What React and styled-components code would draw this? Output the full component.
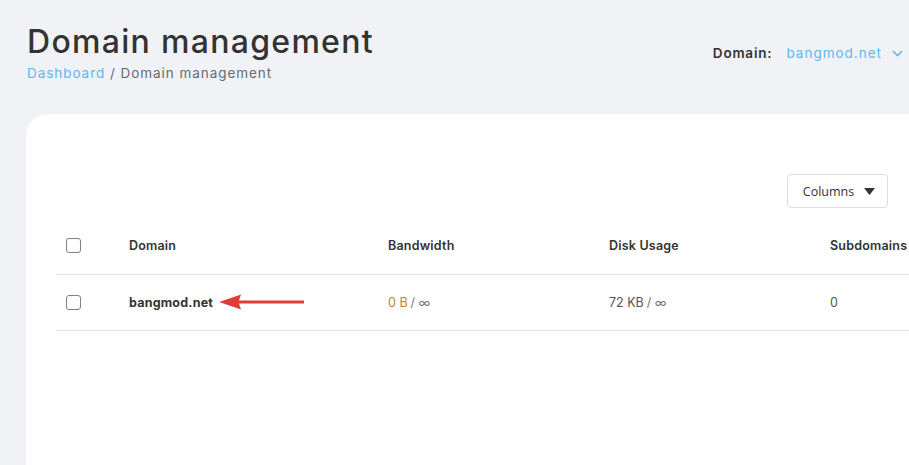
import React from "react";
import styled, { createGlobalStyle } from "styled-components";

const Global = createGlobalStyle`
  html, body { margin: 0; padding: 0; background: #f1f2f6; overflow: hidden; }
  body { font-family: "Inter", "DejaVu Sans", sans-serif; color: #333; }
  * { box-sizing: border-box; }
`;

const Page = styled.div`
  width: 909px;
  height: 465px;
  overflow: hidden;
  background: #f1f2f6;
`;

const Header = styled.header`
  display: flex;
  justify-content: space-between;
  align-items: flex-start;
  padding: 22px 6px 0 27px;
  height: 114px;
`;

const TitleBlock = styled.div`
  display: flex;
  flex-direction: column;
`;

const Title = styled.h1`
  margin: 0;
  font-size: 32px;
  font-weight: 500;
  line-height: 40px;
  color: #333;
  letter-spacing: 1.3px;
`;

const Crumbs = styled.div`
  font-size: 13.5px;
  line-height: 20px;
  color: #666a73;
  margin-top: 1px;
  letter-spacing: 0.95px;
`;

const CrumbLink = styled.a`
  color: #60b6f5;
  text-decoration: none;
`;

const DomainPicker = styled.div`
  display: flex;
  align-items: center;
  margin-top: 23px;
  font-size: 13.5px;
`;

const PickerLabel = styled.span`
  font-weight: 600;
  color: #333;
  margin-right: 14px;
  letter-spacing: 0.8px;
`;

const PickerValue = styled.span`
  color: #60b6f5;
  display: flex;
  align-items: center;
  gap: 10px;
  letter-spacing: 1px;
`;

const Card = styled.section`
  margin-left: 26px;
  width: 920px;
  height: 400px;
  background: #fff;
  border-radius: 22px 0 0 0;
  padding: 60px 0 0 30px;
`;

const Toolbar = styled.div`
  display: flex;
  justify-content: flex-end;
  width: 832px;
  margin-bottom: 10px;
`;

const ColumnsButton = styled.button`
  height: 34px;
  width: 101px;
  border: 1px solid #dcdde0;
  border-radius: 4px;
  background: #fff;
  font-family: "Open Sans", sans-serif;
  font-size: 12.5px;
  color: #333;
  display: flex;
  align-items: center;
  justify-content: center;
  gap: 10px;
  padding: 0 0 0 3px;
`;

const Table = styled.table`
  border-collapse: collapse;
  width: 900px;
  font-size: 12.5px;
  letter-spacing: 0.2px;
`;

const Th = styled.th`
  text-align: left;
  font-weight: 600;
  color: #333;
  height: 56px;
  padding: 0 0 0 ${(p) => p.$pl || 0}px;
  width: ${(p) => p.$w}px;
  border-bottom: 1px solid #e2e3e6;
  vertical-align: middle;
`;

const Td = styled.td`
  height: 56px;
  padding: 0 0 0 ${(p) => p.$pl || 0}px;
  color: ${(p) => p.$color || "#555"};
  font-weight: ${(p) => (p.$bold ? 700 : 400)};
  border-bottom: 1px solid #e2e3e6;
  vertical-align: middle;
`;

const Check = styled.span`
  display: block;
  width: 15px;
  height: 15px;
  border: 1px solid #7a8090;
  border-radius: 3px;
  background: #fff;
`;

const DomainCell = styled.div`
  display: flex;
  align-items: center;
  gap: 5px;
  color: #333;
`;

const Usage = styled.span`
  color: ${(p) => p.$color};
  letter-spacing: 0;
`;

const Slash = styled.span`
  color: #777;
  margin-left: 3px;
  letter-spacing: 0;
`;

function Arrow() {
  return (
    <svg width="88" height="18" viewBox="0 0 88 18">
      <path d="M86 7.5 L21 7.5 L23 1.5 L1 9 L23 16.5 L21 10.5 L86 10.5 Z" fill="#e53a3a" />
    </svg>
  );
}

export default function App() {
  return (
    <Page>
      <Global />
      <Header>
        <TitleBlock>
          <Title>Domain management</Title>
          <Crumbs>
            <CrumbLink>Dashboard</CrumbLink> / Domain management
          </Crumbs>
        </TitleBlock>
        <DomainPicker>
          <PickerLabel>Domain:</PickerLabel>
          <PickerValue>
            bangmod.net
            <svg width="11" height="7" viewBox="0 0 11 7">
              <path d="M1 1 L5.5 5.5 L10 1" fill="none" stroke="#60b6f5" strokeWidth="1.6" />
            </svg>
          </PickerValue>
        </DomainPicker>
      </Header>
      <Card>
        <Toolbar>
          <ColumnsButton>
            Columns
            <svg width="11" height="7" viewBox="0 0 11 7">
              <path d="M0 0 L11 0 L5.5 7 Z" fill="#333" />
            </svg>
          </ColumnsButton>
        </Toolbar>
        <Table>
          <thead>
            <tr>
              <Th $w={73} $pl={10}><Check /></Th>
              <Th $w={259}>Domain</Th>
              <Th $w={221}>Bandwidth</Th>
              <Th $w={221}>Disk Usage</Th>
              <Th>Subdomains</Th>
            </tr>
          </thead>
          <tbody>
            <tr>
              <Td $pl={10}><Check /></Td>
              <Td $bold>
                <DomainCell>
                  bangmod.net
                  <Arrow />
                </DomainCell>
              </Td>
              <Td>
                <Usage $color="#c47f3a">0 B</Usage>
                <Slash>/ ∞</Slash>
              </Td>
              <Td>
                <Usage $color="#555">72 KB</Usage>
                <Slash>/ ∞</Slash>
              </Td>
              <Td>0</Td>
            </tr>
          </tbody>
        </Table>
      </Card>
    </Page>
  );
}
